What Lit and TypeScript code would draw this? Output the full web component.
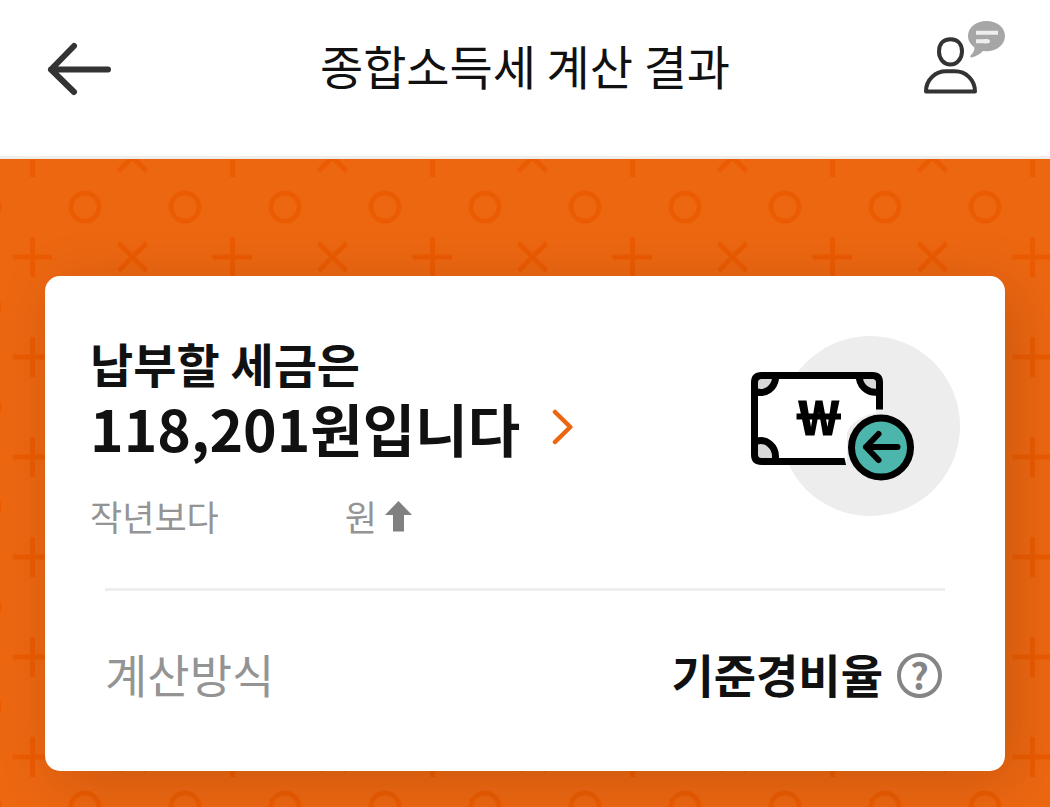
import { LitElement, html, css, svg } from "lit";
import { customElement, property } from "lit/decorators.js";

const backArrow = svg`
  <svg width="66" height="56" viewBox="0 0 66 56" fill="none" stroke="#333" stroke-width="6" stroke-linecap="round" stroke-linejoin="round" aria-hidden="true">
    <path d="M29 5 6 28.500 29 51M6 28.500H63" />
  </svg>`;

const consultIcon = svg`
  <svg width="81" height="96" viewBox="0 0 81 96" fill="none" aria-hidden="true">
    <path d="M26.500 18.300C34 18.300 38 23.500 38 30.500S33 43.500 26.500 43.500 15 38 15 30.500 19 18.300 26.500 18.300Z" stroke="#333" stroke-width="4" />
    <path d="M2 70.500C2 58 12 50.300 22 50.300H31C42 50.300 51 59 51 70.500Z" stroke="#333" stroke-width="4" stroke-linejoin="round" />
    <path d="M62.500 0C73 0 81 6.500 81 15S73 30.300 62.500 30.300L59 30C56 33 52 35.500 47.500 36.500 46 36.500 46 35 47 34 49 32 50.500 29.500 50.500 26.500 46.500 23.500 44 19.500 44 15 44 6.500 52 0 62.500 0Z" fill="#a6a6a6" />
    <path d="M52 11.800H74M52 20.300H64" stroke="#eee" stroke-width="4" />
    <path d="M60 20.300H64" stroke="#eee" stroke-width="4" stroke-linecap="round" />
  </svg>`;

const chevron = svg`
  <svg width="22" height="36" viewBox="0 0 22 36" fill="none" stroke="#ec6610" stroke-width="4.500" stroke-linecap="round" stroke-linejoin="round" aria-hidden="true">
    <path d="M3 3 18.300 18 3 33" />
  </svg>`;

const upArrow = svg`
  <svg width="27" height="31" viewBox="0 0 27 31" fill="#808080" aria-hidden="true">
    <path d="M13.500 0 27 14H19V30.500H8V14H0Z" />
  </svg>`;

const billIllustration = svg`
  <svg class="bill" width="209" height="180" viewBox="0 0 209 180" fill="none" aria-hidden="true">
    <circle cx="119" cy="90" r="90" fill="#ededed" />
    <path d="M10 39H122Q128 39 128 45V73.500H125V77Q105 80 96 96V124H10Q3.500 124 3.500 118V45Q3.500 39 10 39Z" fill="#fff" />
    <path d="M4 40H24.500A15 17 0 0 1 4 56ZM128 40H108.500A16 17 0 0 0 128 56ZM4 125H24.500A16 17 0 0 0 4 105Z" fill="#d8d8d8" />
    <path d="M128.500 73.500V46.500Q128.500 39.500 121.500 39.500H10.500Q3.500 39.500 3.500 46.500V118.500Q3.500 125.500 10.500 125.500H93" stroke="#000" stroke-width="7" />
    <path d="M92.500 122H93.500L95 129H92.500Z" fill="#000" />
    <path d="M24.500 41V43A15 16 0 0 1 6 56M108.500 41V43A16 16 0 0 0 127 56M24.500 124V121A15 16 0 0 0 6 105" stroke="#000" stroke-width="7" />
    <path d="M47 64.500H55.500L60 91 64.500 64.500H71.500L76.500 91 80.500 64.500H88.500L81 99.500H72L68 76 63.500 99.500H54.500Z" fill="#000" />
    <path d="M45.500 80.500H90" stroke="#000" stroke-width="6" />
    <circle cx="130" cy="111.500" r="29.500" fill="#4db6ac" stroke="#000" stroke-width="7" />
    <path d="M127.500 98 115 111 127.500 124M115 111H146.500" stroke="#000" stroke-width="6" stroke-linecap="round" stroke-linejoin="round" />
  </svg>`;

@customElement("pattern-backdrop")
export class PatternBackdrop extends LitElement {
  static styles = css`
    :host {
      position: absolute;
      inset: 0;
      overflow: hidden;
    }
    .canvas {
      display: block;
      width: 100%;
      height: 100%;
    }
  `;

  render() {
    return html`
      <svg class="canvas" aria-hidden="true">
        <defs>
          <pattern id="marks" width="200" height="100" y="-2" patternUnits="userSpaceOnUse">
            <g fill="none" stroke="#eb5a00" stroke-width="5" stroke-opacity="0.9">
              <circle cx="85" cy="50" r="14" />
              <circle cx="185" cy="50" r="14" />
              <circle cx="-15" cy="50" r="14" />
              <path d="M12.500 100H52M32.500 0V20M32.500 80V100M12.500 0H52" />
              <path d="M118.500 86 132.500 100 146.500 86M118.500 14 132.500 0 146.500 14" />
            </g>
          </pattern>
        </defs>
        <rect width="100%" height="100%" fill="url(#marks)" />
      </svg>
    `;
  }
}

@customElement("tax-card")
export class TaxCard extends LitElement {
  @property() amount = "118,201";
  @property() difference = "";
  @property() method = "기준경비율";

  static styles = css`
    :host {
      display: block;
      position: relative;
      box-sizing: border-box;
      padding: 57px 45px 71px;
      border-radius: 15px;
      background: #fff;
      color: #111;
      box-shadow: 10px 10px 60px rgba(0, 0, 0, 0.15);
    }
    .summary {
      display: flex;
      justify-content: space-between;
      align-items: flex-start;
    }
    .heading {
      margin: 0;
      font-size: 47px;
      font-weight: 700;
      line-height: 60px;
    }
    .amount {
      display: flex;
      align-items: center;
      gap: 32px;
      color: inherit;
      text-decoration: none;
      font-size: 57px;
      line-height: 68px;
    }
    .compare {
      display: flex;
      align-items: center;
      margin: 30px 0 0;
      color: #949494;
      font-size: 35px;
      line-height: 50px;
    }
    .difference {
      min-width: 126px;
    }
    .trend {
      display: flex;
      margin-left: 8px;
    }
    .bill {
      flex: none;
      margin-top: 3px;
    }
    .details {
      display: flex;
      justify-content: space-between;
      margin: 47px 15px 0;
      padding-top: 55px;
      border-top: 3px solid #eee;
      font-size: 46px;
      line-height: 54px;
    }
    .label {
      color: #949494;
    }
    .value {
      display: flex;
      align-items: flex-start;
      gap: 14px;
      padding-right: 3px;
      font-weight: 700;
    }
    .help {
      display: flex;
      align-items: center;
      justify-content: center;
      box-sizing: border-box;
      width: 45px;
      height: 45px;
      margin: 7px 0 0;
      padding: 0 0 4px;
      border: 4px solid #858585;
      border-radius: 50%;
      background: none;
      color: #858585;
      font: inherit;
      font-size: 36px;
      line-height: 32px;
    }
  `;

  render() {
    return html`
      <div class="summary">
        <div>
          <h2 class="heading">
            납부할 세금은
            <a class="amount" href="#detail">${this.amount}원입니다 ${chevron}</a>
          </h2>
          <p class="compare">
            <span>작년보다</span><span class="difference">${this.difference}</span><span>원</span>
            <span class="trend">${upArrow}</span>
          </p>
        </div>
        ${billIllustration}
      </div>
      <div class="details">
        <span class="label">계산방식</span>
        <span class="value">${this.method}<button class="help" type="button" aria-label="계산방식 도움말">?</button></span>
      </div>
    `;
  }
}

@customElement("app-root")
export class AppRoot extends LitElement {
  static styles = css`
    :host {
      display: flex;
      flex-direction: column;
      min-height: 100vh;
      overflow: hidden;
      background: #fff;
      color: #111;
      font-family: "Noto Sans CJK KR", sans-serif;
    }
    .bar {
      display: grid;
      grid-template-columns: 1fr auto 1fr;
      align-items: center;
      padding: 21px 45px 39px;
      border-bottom: 3px solid #eee;
    }
    .title {
      margin: 0 0 8px;
      font-size: 47px;
      font-weight: 400;
      line-height: 60px;
    }
    .icon-button {
      display: flex;
      padding: 0;
      border: 0;
      background: none;
    }
    .consult {
      justify-self: end;
    }
    .hero {
      position: relative;
      flex: 1;
      padding: 117px 45px 36px;
      background: #ed6711;
    }
  `;

  render() {
    return html`
      <header class="bar">
        <button class="icon-button" type="button" aria-label="뒤로">${backArrow}</button>
        <h1 class="title">종합소득세 계산 결과</h1>
        <button class="icon-button consult" type="button" aria-label="상담">${consultIcon}</button>
      </header>
      <main class="hero">
        <pattern-backdrop></pattern-backdrop>
        <tax-card></tax-card>
      </main>
    `;
  }
}
